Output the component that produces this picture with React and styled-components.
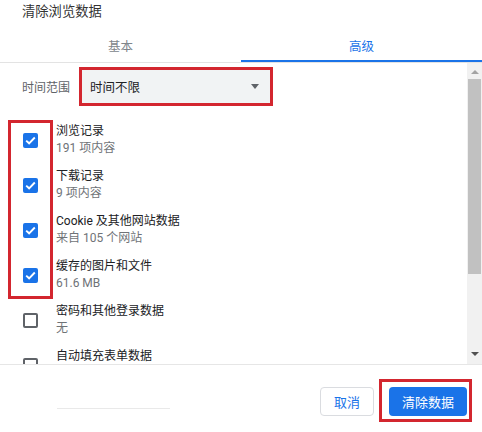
import styled, { createGlobalStyle } from "styled-components";

const GlobalStyle = createGlobalStyle`
  html, body {
    margin: 0;
    padding: 0;
    background: #fff;
  }
  body {
    font-family: Roboto, "Noto Sans CJK SC", sans-serif;
  }
`;

const items = [
  { title: "浏览记录", sub: "191 项内容", checked: true },
  { title: "下载记录", sub: "9 项内容", checked: true },
  { title: "Cookie 及其他网站数据", sub: "来自 105 个网站", checked: true },
  { title: "缓存的图片和文件", sub: "61.6 MB", checked: true },
  { title: "密码和其他登录数据", sub: "无", checked: false },
  { title: "自动填充表单数据", sub: "", checked: false },
];

const App = () => {
  return (
    <>
      <GlobalStyle />
      <Dialog>
        <Title>清除浏览数据</Title>
        <Tabs>
          <Tab>基本</Tab>
          <Tab active>高级</Tab>
        </Tabs>

        <Body>
          <Content>
            <RangeRow>
              <RangeLabel>时间范围</RangeLabel>
              <Highlight>
                <Select>
                  <span>时间不限</span>
                  <Caret />
                </Select>
              </Highlight>
            </RangeRow>

            {items.map((item) => (
              <Item key={item.title}>
                <CheckCell>
                  <Checkbox checked={item.checked}>
                    {item.checked && (
                      <svg width="11" height="9" viewBox="0 0 11 9">
                        <path
                          d="M1.2 4.6 L4.1 7.3 L9.8 1.5"
                          fill="none"
                          stroke="#fff"
                          strokeWidth="1.9"
                        />
                      </svg>
                    )}
                  </Checkbox>
                </CheckCell>
                <ItemText>
                  <ItemTitle>{item.title}</ItemTitle>
                  {item.sub && <ItemSub>{item.sub}</ItemSub>}
                </ItemText>
              </Item>
            ))}

            <CheckMark />
          </Content>

          <Scrollbar>
            <ArrowUp />
            <Thumb />
            <Track />
            <ArrowDown />
          </Scrollbar>
        </Body>

        <Footer>
          <FaintLine />
          <Buttons>
            <CancelButton>取消</CancelButton>
            <PrimaryWrap>
              <PrimaryButton>清除数据</PrimaryButton>
            </PrimaryWrap>
          </Buttons>
        </Footer>
      </Dialog>
    </>
  );
};

export default App;

const RED = "#d3262f";
const BLUE = "#1a73e8";

const Dialog = styled.div`
  width: 482px;
  height: 432px;
  display: flex;
  flex-direction: column;
  background: #fff;
  overflow: hidden;
`;

const Title = styled.div`
  height: 24px;
  line-height: 24px;
  padding-left: 22px;
  font-size: 13.3px;
  color: #333;
`;

const Tabs = styled.div`
  display: flex;
  height: 38px;
  border-bottom: 1px solid #e3e3e3;
`;

const Tab = styled.div`
  flex: 1;
  display: flex;
  align-items: center;
  justify-content: center;
  padding-top: 4px;
  font-size: 12.5px;
  color: ${(p) => (p.active ? BLUE : "#80868b")};
  box-shadow: ${(p) => (p.active ? `inset 0 -2px 0 ${BLUE}` : "none")};
`;

const Body = styled.div`
  display: flex;
  height: 301px;
  border-bottom: 1px solid #e6e6e6;
`;

const Content = styled.div`
  position: relative;
  flex: 1;
  overflow: hidden;
`;

const RangeRow = styled.div`
  display: flex;
  align-items: center;
  padding: 4px 0 12px 22px;
  gap: 9px;
`;

const RangeLabel = styled.span`
  font-size: 12px;
  color: #5f6368;
`;

const Highlight = styled.div`
  border: 3px solid ${RED};
`;

const Select = styled.div`
  width: 188px;
  height: 33px;
  box-sizing: border-box;
  background: #f1f3f4;
  display: flex;
  align-items: center;
  justify-content: space-between;
  padding: 0 11px 0 8px;
  font-size: 12.5px;
  color: #202124;
`;

const Caret = styled.span`
  width: 0;
  height: 0;
  border-left: 4.5px solid transparent;
  border-right: 4.5px solid transparent;
  border-top: 5px solid #5f6368;
`;

const Item = styled.div`
  display: flex;
  height: 45px;
`;

const CheckCell = styled.div`
  width: 56px;
  padding-left: 23px;
  box-sizing: border-box;
  display: flex;
  align-items: center;
`;

const Checkbox = styled.span`
  width: 15px;
  height: 15px;
  box-sizing: border-box;
  border-radius: 2px;
  display: flex;
  align-items: center;
  justify-content: center;
  background: ${(p) => (p.checked ? BLUE : "#fff")};
  border: ${(p) => (p.checked ? "none" : "2px solid #5f6368")};
`;

const ItemText = styled.div`
  display: flex;
  flex-direction: column;
  padding-top: 5px;
`;

const ItemTitle = styled.span`
  font-size: 12px;
  line-height: 17px;
  color: #202124;
`;

const ItemSub = styled.span`
  font-size: 12px;
  line-height: 17px;
  color: #6f7377;
`;

const CheckMark = styled.div`
  position: absolute;
  left: 8px;
  top: 57px;
  width: 45px;
  height: 179px;
  box-sizing: border-box;
  border: 3px solid ${RED};
  pointer-events: none;
`;

const Scrollbar = styled.div`
  width: 15px;
  background: #f1f1f1;
  display: flex;
  flex-direction: column;
  align-items: center;
`;

const ArrowUp = styled.span`
  margin: 7px 0 5px;
  width: 0;
  height: 0;
  border-left: 4px solid transparent;
  border-right: 4px solid transparent;
  border-bottom: 4px solid #a3a3a3;
`;

const Thumb = styled.div`
  width: 13px;
  height: 195px;
  background: #c1c1c1;
`;

const Track = styled.div`
  flex: 1;
`;

const ArrowDown = styled.span`
  margin: 0 0 8px;
  width: 0;
  height: 0;
  border-left: 4px solid transparent;
  border-right: 4px solid transparent;
  border-top: 4px solid #505050;
`;

const Footer = styled.div`
  flex: 1;
  display: flex;
  align-items: flex-start;
  justify-content: space-between;
`;

const FaintLine = styled.div`
  margin: 43px 0 0 57px;
  width: 113px;
  height: 1px;
  background: #e9e9e9;
`;

const Buttons = styled.div`
  display: flex;
  gap: 15px;
  padding: 22px 15px 0 0;
`;

const BaseButton = styled.button`
  height: 29px;
  box-sizing: border-box;
  border-radius: 4px;
  font-family: inherit;
  font-size: 13px;
  padding: 0;
`;

const CancelButton = styled(BaseButton)`
  width: 54px;
  background: #fff;
  border: 1px solid #dadce0;
  color: ${BLUE};
`;

const PrimaryWrap = styled.div`
  position: relative;
  &::after {
    content: "";
    position: absolute;
    top: -8px;
    left: -10px;
    right: -5px;
    bottom: -6px;
    border: 3px solid ${RED};
    pointer-events: none;
  }
`;

const PrimaryButton = styled(BaseButton)`
  width: 78px;
  background: ${BLUE};
  border: none;
  color: #fff;
  display: block;
`;
